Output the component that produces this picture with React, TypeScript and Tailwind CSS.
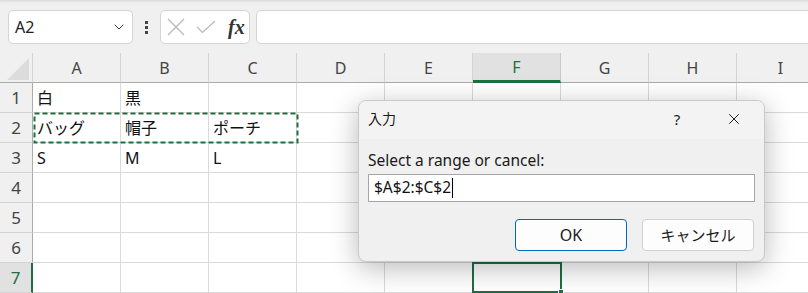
import { ChevronDown, X } from "lucide-react";

const cols = ["A", "B", "C", "D", "E", "F", "G", "H", "I"];

const data: Record<number, string[]> = {
  1: ["白", "黒"],
  2: ["バッグ", "帽子", "ポーチ"],
  3: ["S", "M", "L"],
};

const jp = { fontFamily: '"Noto Sans", "Noto Sans CJK JP", sans-serif' };

function Toolbar() {
  return (
    <div className="h-[53px] flex items-start pt-[10px] pl-2 gap-0 bg-[#f0f0f0] overflow-hidden shadow-[inset_0_3px_3px_-2px_rgba(0,0,0,0.12)]">
      {/* name box */}
      <div className="w-[125px] h-[34px] shrink-0 flex items-center justify-between pl-[6px] pr-[5px] bg-white border border-[#d4d4d4] rounded-[5px]">
        <span className="text-[16px] text-[#222]" style={jp}>A2</span>
        <ChevronDown size={16} strokeWidth={1.5} className="text-[#333]" />
      </div>
      <div className="w-[27px] h-[34px] shrink-0 flex flex-col items-center justify-center gap-[2px]">
        <span className="w-[3px] h-[3px] bg-[#444]" />
        <span className="w-[3px] h-[3px] bg-[#444]" />
        <span className="w-[3px] h-[3px] bg-[#444]" />
      </div>
      {/* cancel / enter / fx */}
      <div className="w-[90px] h-[34px] shrink-0 flex items-center bg-white border border-[#d4d4d4] rounded-[5px] pl-[6px]">
        <svg width="18" height="18" viewBox="0 0 18 18" className="shrink-0">
          <path d="M1 1 L17 17 M17 1 L1 17" stroke="#b8b8b8" strokeWidth="1.2" fill="none" />
        </svg>
        <svg width="20" height="14" viewBox="0 0 20 14" className="shrink-0 ml-[11px]">
          <path d="M1 7 L6.5 12.5 L19 1" stroke="#b8b8b8" strokeWidth="1.2" fill="none" />
        </svg>
        <span className="text-[20px] italic font-bold text-[#333] leading-none ml-[12px]" style={{ fontFamily: '"Liberation Serif", serif' }}>
          fx
        </span>
      </div>
      <div className="ml-[6px] w-[600px] h-[34px] shrink-0 bg-white border border-[#d4d4d4] rounded-[5px]" />
    </div>
  );
}

function HeaderRow() {
  return (
    <div className="h-[30px] flex bg-[#f0f0f0]">
      <div className="w-[33px] shrink-0 flex items-end justify-end pr-[3px] pb-[2px] border-b border-[#ababab] border-r border-r-[#d4d4d4]">
        <div className="w-0 h-0 border-l-[22px] border-l-transparent border-b-[22px] border-b-[#dcdcdc]" />
      </div>
      {cols.map((c) => (
        <div
          key={c}
          className={
            c === "F"
              ? "w-[88px] shrink-0 flex items-center justify-center text-[16px] text-[#1e6e42] bg-[#e1e1e1] border-r border-[#c8c8c8] border-b-[3px] border-b-[#1e6e42]"
              : "w-[88px] shrink-0 flex items-center justify-center text-[16px] text-[#444] border-r border-[#d4d4d4] border-b border-b-[#ababab]"
          }
          style={jp}
        >
          {c}
        </div>
      ))}
      <div className="flex-1 border-b border-[#ababab]" />
    </div>
  );
}

function Row({ n }: { n: number }) {
  const vals = data[n] || [];
  const active = n === 7;
  return (
    <div className="h-[30px] flex">
      <div
        className={
          active
            ? "w-[33px] shrink-0 flex items-center justify-center text-[17px] text-[#1e6e42] bg-[#e1e1e1] border-r-2 border-[#1e6e42] border-b border-b-[#d4d4d4]"
            : "w-[33px] shrink-0 flex items-center justify-center text-[17px] text-[#444] bg-[#f0f0f0] border-r border-[#ababab] border-b border-b-[#d4d4d4]"
        }
        style={jp}
      >
        {n}
      </div>
      {cols.map((c, i) => (
        <div
          key={c}
          className="w-[88px] shrink-0 flex items-center pl-[4px] text-[16px] text-[#111] bg-white border-r border-b border-[#dadada]"
          style={jp}
        >
          {vals[i] || ""}
        </div>
      ))}
      <div className="flex-1 bg-white border-b border-[#dadada]" />
    </div>
  );
}

function Dialog() {
  return (
    <div className="absolute left-[358px] top-[100px] w-[407px] h-[162px] rounded-[8px] bg-[#f0f0f0] border border-[#c9c9c9] shadow-[0_6px_28px_rgba(0,0,0,0.28)] overflow-hidden" style={jp}>
      <div className="h-[38px] flex items-start pt-[7px] bg-[#f3f3f3] pl-[9px]">
        <span className="text-[14px] text-[#1a1a1a] flex-1">入力</span>
        <span className="text-[15px] text-[#1a1a1a] w-[40px] text-center mr-[14px]">?</span>
        <div className="w-[46px] flex justify-center mr-[7px] pt-[2px]">
          <X size={18} strokeWidth={1.3} className="text-[#1a1a1a]" />
        </div>
      </div>
      <div className="px-[9px] pt-[11px]">
        <div className="text-[15.5px] text-[#1a1a1a] leading-[20px]">Select a range or cancel:</div>
        <div className="mt-[4px] h-[28px] bg-white border border-[#a6a6a6] flex items-center pl-[5px]">
          <span className="text-[15.5px] text-[#111]">$A$2:$C$2</span>
          <span className="w-px h-[20px] bg-black ml-px" />
        </div>
        <div className="mt-[17px] flex justify-end gap-[15px] pr-[1px]">
          <button className="w-[112px] h-[32px] rounded-[4px] bg-[#fdfdfd] border border-[#0067c0] text-[16px] text-[#1a1a1a]">OK</button>
          <button className="w-[112px] h-[32px] rounded-[4px] bg-[#fdfdfd] border border-[#d0d0d0] text-[15px] text-[#1a1a1a]">キャンセル</button>
        </div>
      </div>
    </div>
  );
}

export default function App() {
  return (
    <div className="relative w-[808px] h-[293px] overflow-hidden bg-[#f0f0f0]">
      <Toolbar />
      <HeaderRow />
      {[1, 2, 3, 4, 5, 6, 7].map((n) => (
        <Row key={n} n={n} />
      ))}

      {/* copy marquee A2:C2 */}
      <svg className="absolute left-[33px] top-[112px]" width="266" height="32">
        <rect x="1.5" y="1.5" width="263" height="29" fill="none" stroke="#1e6e42" strokeWidth="2" strokeDasharray="5 3" />
      </svg>

      {/* active cell F7 */}
      <div className="absolute left-[472px] top-[262px] w-[90px] h-[31px] border-2 border-[#1e6e42]" />
      <div className="absolute left-[558px] top-[289px] w-[6px] h-[6px] bg-[#1e6e42] border border-white" />

      <Dialog />
    </div>
  );
}
